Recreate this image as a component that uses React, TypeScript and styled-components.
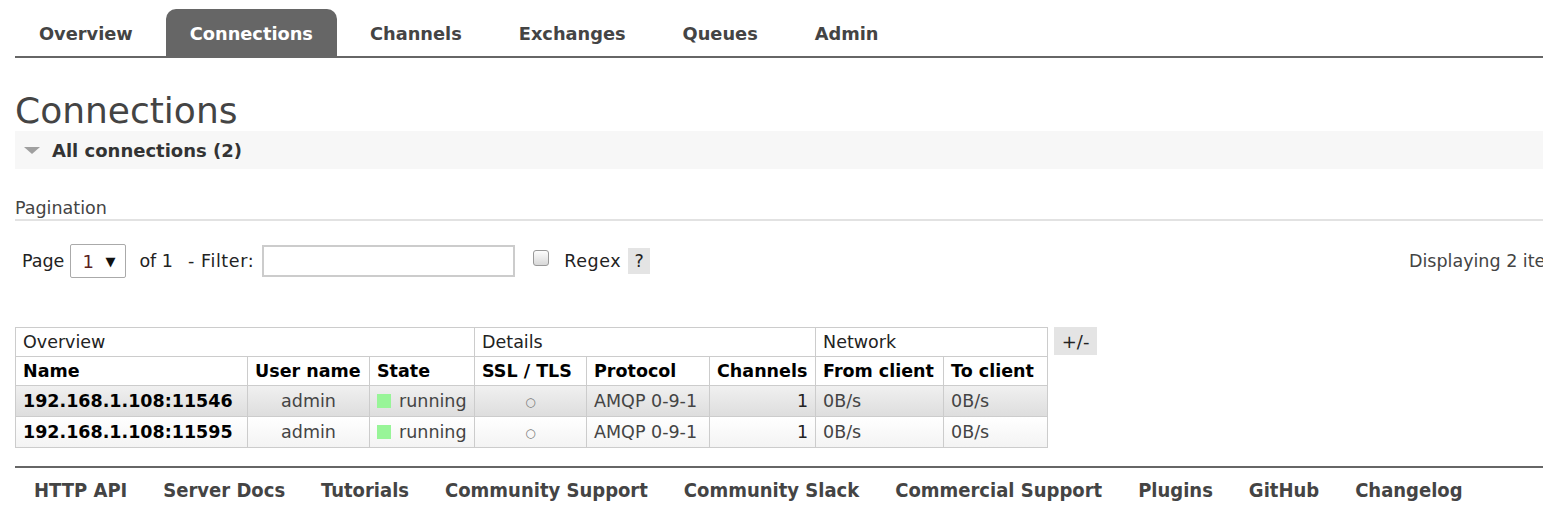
import React from 'react';
import styled, { createGlobalStyle } from 'styled-components';

// == styles =======================================================================================
const GlobalStyle = createGlobalStyle`
  html, body {
    margin: 0;
    padding: 0;
    background: #fff;
    overflow: hidden;
  }

  body {
    font-family: "DejaVu Sans", Verdana, sans-serif;
    color: #444;
  }

  * {
    box-sizing: border-box;
  }
`;

const Root = styled.div`
  width: 1724px;
  padding: 0 15px;
`;

const Menu = styled.ul`
  display: flex;
  margin: 9px 0 0;
  padding: 0;
  list-style: none;
  border-bottom: 2px solid #666;
`;

const Tab = styled.li<{ $active?: boolean }>`
  height: 47px;
  line-height: 50px;
  padding: 0 24px;
  margin-right: 9px;
  font-size: 17.8px;
  font-weight: bold;
  color: ${ ( p ) => ( p.$active ? '#fff' : '#444' ) };
  background: ${ ( p ) => ( p.$active ? '#666' : 'transparent' ) };
  border-radius: 10px 10px 0 0;
`;

const Title = styled.h1`
  margin: 32px 0 0;
  font-size: 36px;
  line-height: 41px;
  font-weight: normal;
  color: #444;
`;

const SectionBar = styled.div`
  display: flex;
  align-items: center;
  height: 38px;
  padding-left: 9px;
  background: #f7f7f7;
  font-size: 18px;
  font-weight: bold;
  color: #333;
`;

const Triangle = styled.span`
  width: 0;
  height: 0;
  margin-right: 12px;
  border-left: 8px solid transparent;
  border-right: 8px solid transparent;
  border-top: 7px solid #a0a0a0;
`;

const SubTitle = styled.div`
  margin-top: 28px;
  font-size: 17.5px;
  line-height: 22px;
  color: #444;
  border-bottom: 2px solid #e2e2e2;
`;

const FilterRow = styled.div`
  display: flex;
  justify-content: space-between;
  align-items: center;
  margin-top: 23px;
  height: 34px;
  font-size: 17.5px;
  color: #222;
`;

const FilterLeft = styled.div`
  display: flex;
  align-items: center;
  padding-left: 7px;
`;

const Select = styled.div`
  display: flex;
  align-items: center;
  justify-content: space-between;
  width: 56px;
  height: 34px;
  margin: 0 13px 0 6px;
  padding: 0 10px 0 11px;
  border: 1px solid #aaa;
  border-radius: 2px;
  color: #5a1f1f;
  font-size: 18px;

  span {
    font-size: 13px;
    color: #111;
  }
`;

const Label = styled.span<{ $gap?: number; $spacing?: number }>`
  margin-right: ${ ( p ) => p.$gap ?? 0 }px;
  letter-spacing: ${ ( p ) => p.$spacing ?? 0 }px;
  white-space: nowrap;
`;

const TextInput = styled.div`
  width: 253px;
  height: 32px;
  margin-left: 8px;
  border: 2px solid #ccc;
  background: #fff;
`;

const Checkbox = styled.span`
  width: 16px;
  height: 16px;
  margin: -6px 15px 0 18px;
  border: 1px solid #999;
  border-radius: 3px;
  background: linear-gradient( #fdfdfd, #d8d8d8 );
`;

const HelpBox = styled.span`
  display: inline-flex;
  align-items: center;
  justify-content: center;
  width: 22px;
  height: 26px;
  margin-left: 7px;
  background: #e4e4e4;
  color: #222;
`;

const Displaying = styled.div`
  width: 300px;
  color: #444;
  white-space: nowrap;
`;

const TableWrap = styled.div`
  display: flex;
  align-items: flex-start;
  gap: 6px;
  margin-top: 49px;
`;

const Table = styled.table`
  width: 1032px;
  table-layout: fixed;
  border-collapse: collapse;
  font-size: 17.5px;
  color: #222;

  th, td {
    border: 1px solid #ccc;
    padding: 4px 7px 3px;
    line-height: 21px;
    white-space: nowrap;
    overflow: hidden;
  }
`;

const GroupTh = styled.th`
  text-align: left;
  font-weight: normal;
  color: #222;
`;

const HeadTh = styled.th`
  text-align: left;
  font-weight: bold;
  color: #000;
`;

const Row = styled.tr<{ $alt: boolean }>`
  background: ${ ( p ) => ( p.$alt
    ? 'linear-gradient( #f0f0f0, #dddddd )'
    : 'linear-gradient( #ffffff, #f3f3f3 )' ) };
`;

const Cell = styled.td<{ $align?: 'left' | 'center' | 'right'; $bold?: boolean; $color?: string }>`
  text-align: ${ ( p ) => p.$align ?? 'left' };
  font-weight: ${ ( p ) => ( p.$bold ? 'bold' : 'normal' ) };
  color: ${ ( p ) => p.$color ?? '#444' };
`;

const StateBox = styled.span`
  display: inline-block;
  width: 14px;
  height: 14px;
  margin-right: 8px;
  vertical-align: -1px;
  background: #98f598;
`;

const Ring = styled.span`
  font-size: 12px;
  color: #777;
`;

const ToggleButton = styled.div`
  display: flex;
  align-items: center;
  justify-content: center;
  width: 43px;
  height: 28px;
  background: #e4e4e4;
  font-size: 18px;
  color: #222;
`;

const Footer = styled.ul`
  display: flex;
  margin: 18px 0 0;
  padding: 0 0 0 1px;
  list-style: none;
  border-top: 2px solid #666;
`;

const FooterLink = styled.li`
  padding: 0 18px;
  height: 46px;
  line-height: 45px;
  font-family: "DejaVu Sans Condensed", "DejaVu Sans", sans-serif;
  font-stretch: condensed;
  font-size: 20px;
  font-weight: bold;
  color: #444;
`;

// == data =========================================================================================
const tabs = [ 'Overview', 'Connections', 'Channels', 'Exchanges', 'Queues', 'Admin' ];

const footerLinks = [
  'HTTP API', 'Server Docs', 'Tutorials', 'Community Support', 'Community Slack',
  'Commercial Support', 'Plugins', 'GitHub', 'Changelog',
];

const connections = [
  { name: '192.168.1.108:11546', user: 'admin' },
  { name: '192.168.1.108:11595', user: 'admin' },
];

const colWidths = [ 232, 122, 105, 112, 123, 106, 128, 104 ];

// == component ====================================================================================
export default function App() {
  return <>
    <GlobalStyle />
    <Root>
      <Menu>
        { tabs.map( ( t ) => (
          <Tab key={ t } $active={ t === 'Connections' }>{ t }</Tab>
        ) ) }
      </Menu>

      <Title>Connections</Title>

      <SectionBar>
        <Triangle />
        All connections (2)
      </SectionBar>

      <SubTitle>Pagination</SubTitle>

      <FilterRow>
        <FilterLeft>
          <Label>Page</Label>
          <Select>1 <span>▼</span></Select>
          <Label $gap={ 15 }>of 1</Label>
          <Label $spacing={ 0.6 }>- Filter:</Label>
          <TextInput />
          <Checkbox />
          <Label $spacing={ 0.6 }>Regex</Label>
          <HelpBox>?</HelpBox>
        </FilterLeft>
        <Displaying>Displaying 2 items , page size up to:</Displaying>
      </FilterRow>

      <TableWrap>
        <Table>
          <colgroup>
            { colWidths.map( ( w, i ) => <col key={ i } style={ { width: w } } /> ) }
          </colgroup>
          <thead>
            <tr>
              <GroupTh colSpan={ 3 }>Overview</GroupTh>
              <GroupTh colSpan={ 3 }>Details</GroupTh>
              <GroupTh colSpan={ 2 }>Network</GroupTh>
            </tr>
            <tr>
              <HeadTh>Name</HeadTh>
              <HeadTh>User name</HeadTh>
              <HeadTh>State</HeadTh>
              <HeadTh>SSL / TLS</HeadTh>
              <HeadTh>Protocol</HeadTh>
              <HeadTh>Channels</HeadTh>
              <HeadTh>From client</HeadTh>
              <HeadTh>To client</HeadTh>
            </tr>
          </thead>
          <tbody>
            { connections.map( ( c, i ) => (
              <Row key={ c.name } $alt={ i % 2 === 0 }>
                <Cell $bold $color="#000">{ c.name }</Cell>
                <Cell $align="center">{ c.user }</Cell>
                <Cell><StateBox />running</Cell>
                <Cell $align="center"><Ring>○</Ring></Cell>
                <Cell>AMQP 0-9-1</Cell>
                <Cell $align="right" $color="#222">1</Cell>
                <Cell>0B/s</Cell>
                <Cell>0B/s</Cell>
              </Row>
            ) ) }
          </tbody>
        </Table>
        <ToggleButton>+/-</ToggleButton>
      </TableWrap>

      <Footer>
        { footerLinks.map( ( l ) => <FooterLink key={ l }>{ l }</FooterLink> ) }
      </Footer>
    </Root>
  </>;
}
